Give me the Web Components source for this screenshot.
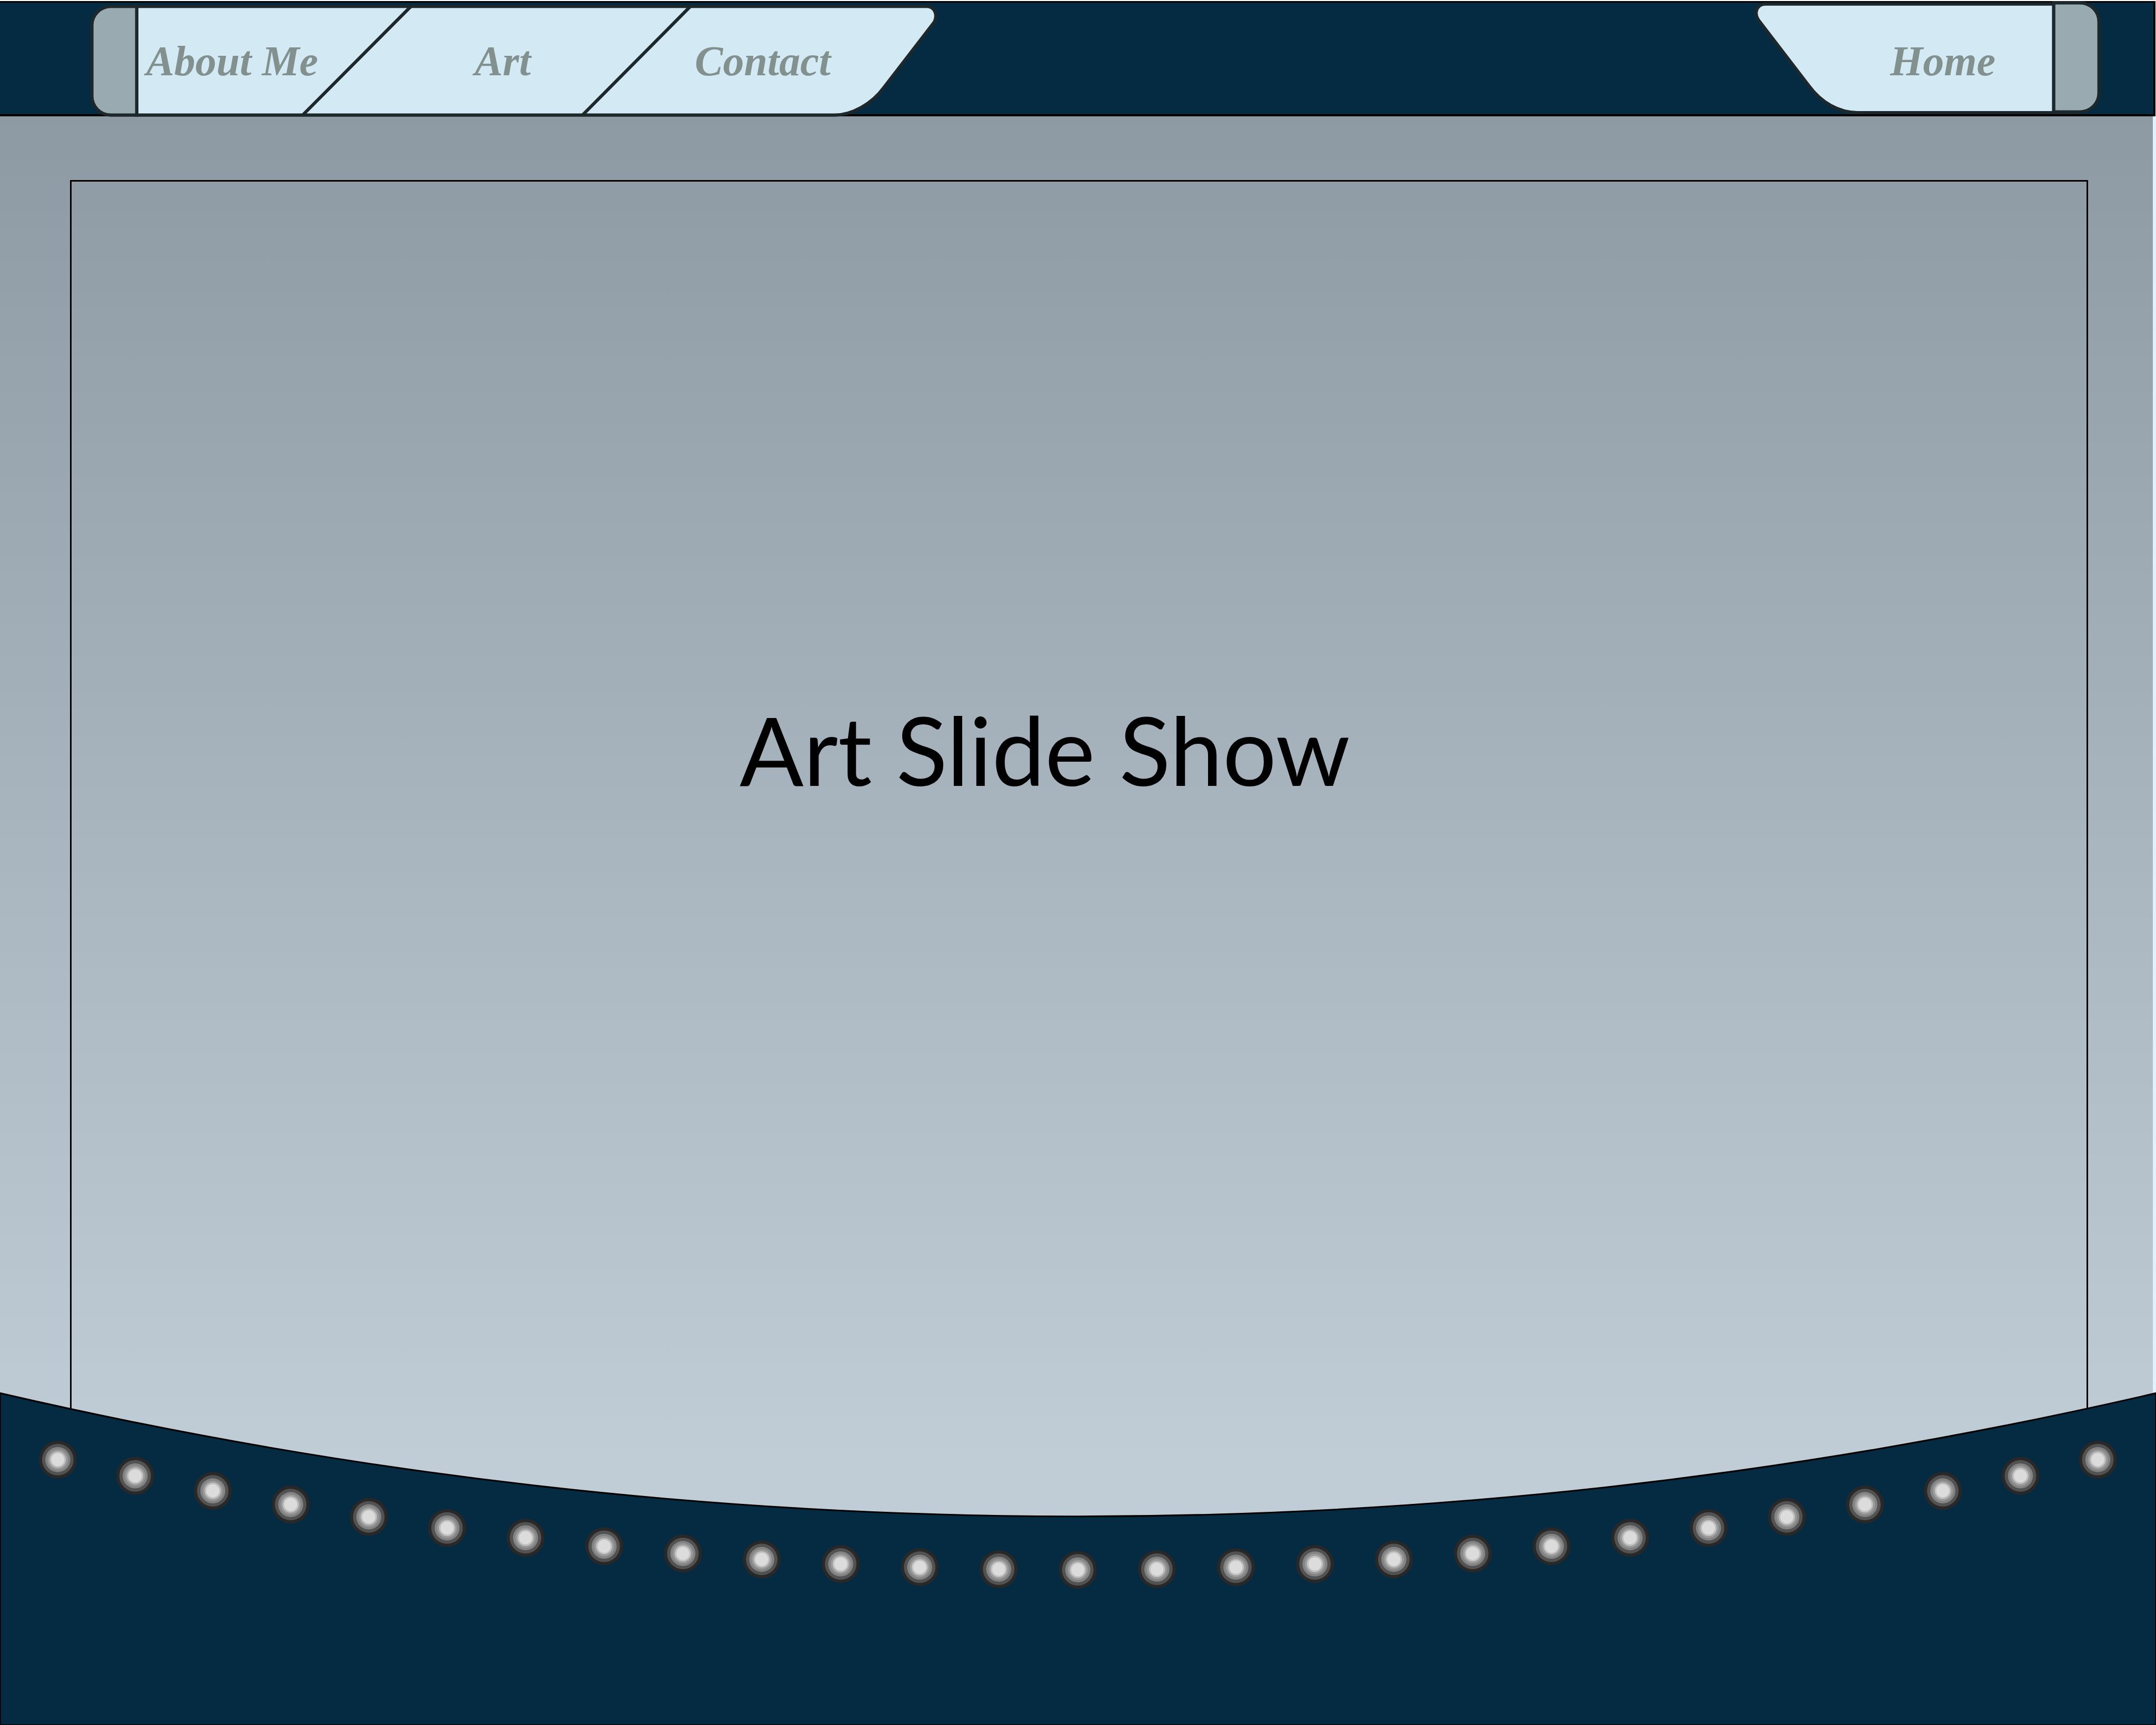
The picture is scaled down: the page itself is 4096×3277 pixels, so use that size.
<!DOCTYPE html>
<html lang="en">
<head>
<meta charset="utf-8">
<title>Art Slide Show</title>
<style>
  body { margin: 0; background: #fff; }
</style>
</head>
<body>
<site-page>
  <site-header slot="header">
    <tab-group slot="start" shape="start">
      <tab-link href="#about">About Me</tab-link>
      <tab-link href="#art">Art</tab-link>
      <tab-link href="#contact">Contact</tab-link>
    </tab-group>
    <tab-group slot="end" shape="end">
      <tab-link href="#home">Home</tab-link>
    </tab-group>
  </site-header>
  <slide-stage>Art Slide Show</slide-stage>
  <light-footer slot="footer"></light-footer>
</site-page>

<script>
  const define = (name, render) => customElements.define(name, class extends HTMLElement {
    connectedCallback() {
      if (this.shadowRoot) return;
      this.attachShadow({ mode: 'open' }).innerHTML = render(this);
    }
  });

  define('site-page', () => `
    <style>
      :host { display: grid; min-height: 100vh; grid-template: auto 1fr auto / minmax(0, 1fr); }
      ::slotted(site-header) { grid-area: 1 / 1; z-index: 1; }
      .content { display: grid; grid-area: 2 / 1 / 4 / 2; }
      ::slotted(light-footer) { grid-area: 3 / 1; z-index: 1; }
    </style>
    <slot name="header"></slot>
    <main class="content"><slot></slot></main>
    <slot name="footer"></slot>`);

  define('site-header', () => `
    <style>
      :host { display: block; }
      header { display: grid; grid-template: 221px / minmax(0, 1fr); }
      .bar { grid-area: 1 / 1; margin: 2px 1px 0 0; background: #042b42;
             border: solid #000; border-width: 3px 4px 4px 0; }
      .tabs { grid-area: 1 / 1; display: flex; justify-content: space-between; align-items: flex-start;
              padding: 0 98px 0 166px; }
    </style>
    <header>
      <div class="bar"></div>
      <nav class="tabs"><slot name="start"></slot><slot name="end"></slot></nav>
    </header>`);

  const outlines = {
    start: `
      <svg width="1622" height="224" viewBox="216 0 2112 292" aria-hidden="true">
        <g stroke="#1c282c" stroke-width="8">
          <path fill="#d3e9f4" d="M337 16H2294C2312 16 2322 36 2312 55L2187 217C2158 257 2108 285 2065 285H337Z"/>
          <path fill="#9aaab1" d="M337 16H273A47 47 0 0 0 226 63V238A47 47 0 0 0 273 285H337Z"/>
          <path fill="none" d="M1016 16L748 285M1708 16L1441 285"/>
        </g>
      </svg>`,
    end: `
      <svg width="672" height="224" viewBox="4330 0 875 292" aria-hidden="true">
        <g stroke="#1c282c" stroke-width="8">
          <path fill="#d3e9f4" d="M5080 10H4366C4346 10 4336 30 4349 50L4474 213C4504 254 4548 279 4594 279H5080Z"/>
          <path fill="#9aaab1" d="M5080 7H5145A47 47 0 0 1 5192 54V230A47 47 0 0 1 5145 277H5080Z"/>
          <path fill="none" d="M5080 279H5145"/>
        </g>
      </svg>`
  };

  define('tab-group', el => {
    const start = el.getAttribute('shape') === 'start';
    return `
    <style>
      :host { display: grid; flex: none; }
      svg { grid-area: 1 / 1; display: block; overflow: visible; }
      .links { grid-area: 1 / 1; display: grid; align-items: center; height: 224px; box-sizing: border-box;
               padding: ${start ? '8px 177px 0 93px' : '8px 96px 0 154px'};
               grid-template-columns: ${start ? '364px 664px 324px' : '422px'}; }
    </style>
    ${outlines[start ? 'start' : 'end']}
    <div class="links"><slot></slot></div>`;
  });

  define('tab-link', el => `
    <style>
      :host { display: grid; justify-items: center; }
      a { color: #82908e; text-decoration: none; white-space: nowrap;
          font: italic bold 80px/96px "Liberation Serif", serif; }
    </style>
    <a href="${el.getAttribute('href')}"><slot></slot></a>`);

  define('slide-stage', () => `
    <style>
      :host { display: grid; box-sizing: border-box; padding: 121px 123px 0 133px;
              border-right: 6px solid #e2f0fb;
              background: linear-gradient(#8d9aa3, #c0cdd6 2560px); }
      section { display: flex; justify-content: center; align-items: flex-start;
                border: 3px solid #000; border-bottom: 0; padding: 958px 130px 0 0; }
      h1 { margin: 0; color: #000; font: 180px/240px Lato, sans-serif; white-space: nowrap; }
    </style>
    <section><h1><slot></slot></h1></section>`);

  const rings = [[47, '#282828'], [39, '#525252'], [31, '#848484'], [25, '#9b9b9b'], [20, '#c2c2c2'], [16, '#dcdcdc']];
  const bulb = step => {
    const radius = 11811, angle = step * 0.01656;
    const x = 2666 + radius * Math.sin(angle);
    const y = 3883 - radius * (1 - Math.cos(angle));
    return rings.map(([r, fill]) => `<circle cx="${x}" cy="${y}" r="${r}" fill="${fill}"/>`).join('');
  };

  define('light-footer', () => `
    <style>
      :host, svg { display: block; }
      svg { width: 100%; height: auto; }
    </style>
    <footer>
      <svg viewBox="0 3440 5333 827" aria-hidden="true">
        <path fill="#042b42" stroke="#000" stroke-width="4" d="M0 3446A11813 11813 0 0 0 5333 3446V4267H0Z"/>
        ${Array.from({ length: 27 }, (_, i) => bulb(i - 13)).join('')}
      </svg>
    </footer>`);
</script>
</body>
</html>
